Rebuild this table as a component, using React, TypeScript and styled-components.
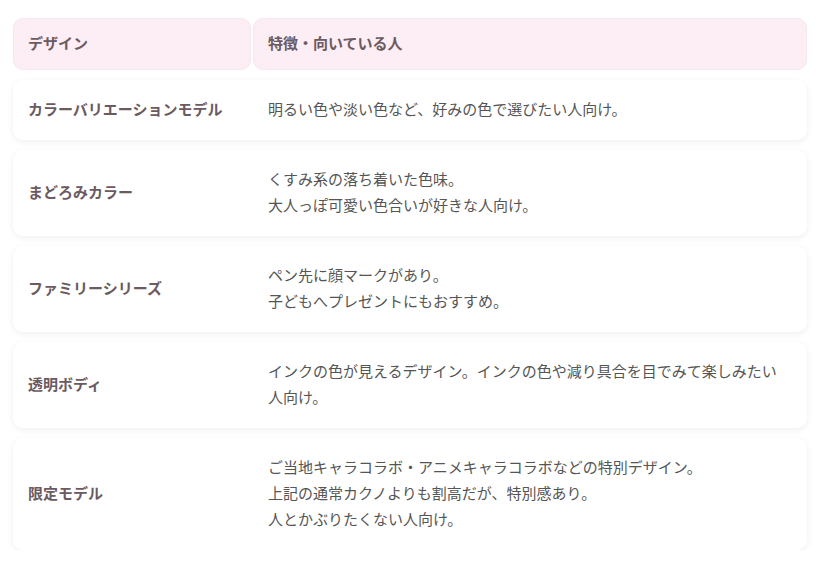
import styled, { createGlobalStyle } from "styled-components";

type Row = {
  design: string;
  lines: string[];
};

const rows: Row[] = [
  {
    design: "カラーバリエーションモデル",
    lines: ["明るい色や淡い色など、好みの色で選びたい人向け。"],
  },
  {
    design: "まどろみカラー",
    lines: ["くすみ系の落ち着いた色味。", "大人っぽ可愛い色合いが好きな人向け。"],
  },
  {
    design: "ファミリーシリーズ",
    lines: ["ペン先に顔マークがあり。", "子どもへプレゼントにもおすすめ。"],
  },
  {
    design: "透明ボディ",
    lines: [
      "インクの色が見えるデザイン。インクの色や減り具合を目でみて楽しみたい人向け。",
    ],
  },
  {
    design: "限定モデル",
    lines: [
      "ご当地キャラコラボ・アニメキャラコラボなどの特別デザイン。",
      "上記の通常カクノよりも割高だが、特別感あり。",
      "人とかぶりたくない人向け。",
    ],
  },
];

function App() {
  return (
    <>
      <GlobalStyle />
      <Page>
        <HeadRow>
          <HeadCell>デザイン</HeadCell>
          <HeadCell>特徴・向いている人</HeadCell>
        </HeadRow>
        {rows.map((row) => (
          <Card key={row.design}>
            <Label>{row.design}</Label>
            <Desc>
              {row.lines.map((line) => (
                <span key={line}>{line}</span>
              ))}
            </Desc>
          </Card>
        ))}
      </Page>
    </>
  );
}

export default App;

const GlobalStyle = createGlobalStyle`
  body {
    margin: 0;
    background: #ffffff;
    font-family: "Noto Sans CJK JP", "Noto Sans", sans-serif;
  }
`;

const Page = styled("div")`
  width: 794px;
  padding: 18px 0 0 13px;
  display: flex;
  flex-direction: column;
  gap: 10px;
`;

const HeadRow = styled("div")`
  display: grid;
  grid-template-columns: 238px 1fr;
  gap: 2px;
`;

const HeadCell = styled("div")`
  background-color: #fdedf4;
  border: 1px solid #f8e6ed;
  border-radius: 10px;
  padding: 11px 14px 13px;
  font-size: 15px;
  line-height: 26px;
  font-weight: 700;
  color: #6b5a60;
`;

const Card = styled("div")`
  display: grid;
  grid-template-columns: 240px 1fr;
  align-items: center;
  background-color: #ffffff;
  border-radius: 10px;
  box-shadow: 0 2px 7px rgba(0, 0, 0, 0.065);
  padding: 16px 0 18px;
`;

const Label = styled("div")`
  padding: 0 15px;
  font-size: 15px;
  line-height: 26px;
  font-weight: 700;
  color: #6b5a60;
`;

const Desc = styled("div")`
  display: flex;
  flex-direction: column;
  padding: 0 25px 0 15px;
  font-size: 15px;
  line-height: 26px;
  color: #555555;
`;
